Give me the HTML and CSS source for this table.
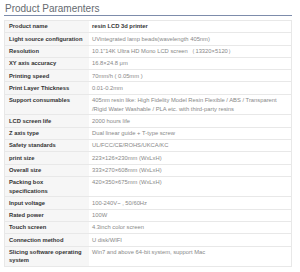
FILE: index.html
```html
<!DOCTYPE html>
<html lang="en">
<head>
    <meta charset="UTF-8">
    <title>Product Paramenters</title>
    <link rel="stylesheet" href="styles.css">
</head>
<body>
    <div class="params">
        <h2 class="params-title">Product Paramenters</h2>
        <table class="spec">
            <tbody>
                <tr><th>Product name</th><td class="strong">resin LCD 3d printer</td></tr>
                <tr><th>Light source configuration</th><td>UVintegrated lamp beads(wavelength 405nm)</td></tr>
                <tr><th>Resolution</th><td>10.1"14K Ultra HD Mono LCD screen （13320×5120）</td></tr>
                <tr><th>XY axis accuracy</th><td>16.8×24.8 μm</td></tr>
                <tr><th>Printing speed</th><td>70mm/h ( 0.05mm )</td></tr>
                <tr><th>Print Layer Thickness</th><td>0.01-0.2mm</td></tr>
                <tr><th>Support consumables</th><td>405nm resin like: High Fidelity Model Resin Flexible / ABS / Transparent /Rigid Water Washable / PLA etc. with third-party resins</td></tr>
                <tr><th>LCD screen life</th><td>2000 hours life</td></tr>
                <tr><th>Z axis type</th><td>Dual linear guide + T-type screw</td></tr>
                <tr><th>Safety standards</th><td>UL/FCC/CE/ROHS/UKCA/KC</td></tr>
                <tr><th>print size</th><td>223×126×230mm (WxLxH)</td></tr>
                <tr><th>Overall size</th><td>333×270×608mm (WxLxH)</td></tr>
                <tr><th>Packing box specifications</th><td>420×350×675mm (WxLxH)</td></tr>
                <tr><th>Input voltage</th><td>100-240V~ , 50/60Hz</td></tr>
                <tr><th>Rated power</th><td>100W</td></tr>
                <tr><th>Touch screen</th><td>4.3inch color screen</td></tr>
                <tr><th>Connection method</th><td>U disk/WIFI</td></tr>
                <tr><th>Slicing software operating system</th><td>Win7 and above 64-bit system, support Mac</td></tr>
            </tbody>
        </table>
    </div>
</body>
</html>
```

FILE: styles.css
```css
body {
    margin: 0;
    background: #fff;
    font-family: "Liberation Sans", Arial, sans-serif;
}
.params {
    padding: 2px 8px 0 4px;
}
.params-title {
    margin: 0;
    padding: 0 0 0 1px;
    font-size: 10px;
    line-height: 13px;
    font-weight: normal;
    color: #666a70;
    border-bottom: 1px solid #7d8cab;
}
.spec {
    width: 100%;
    margin-top: 4px;
    border-collapse: collapse;
    border: 1px solid #e8e8e8;
    font-size: 5.8px;
    line-height: 8.4px;
}
.spec th,
.spec td {
    padding: 1.45px 4px;
    text-align: left;
    vertical-align: top;
    border-bottom: 1px solid #e8e8e8;
}
.spec th {
    width: 74px;
    padding-right: 6px;
    background: #f6f6f6;
    color: #333;
    font-weight: bold;
}
.spec td {
    color: #888;
    padding-left: 3px;
}
.spec td.strong {
    color: #333;
    font-weight: bold;
}
```
